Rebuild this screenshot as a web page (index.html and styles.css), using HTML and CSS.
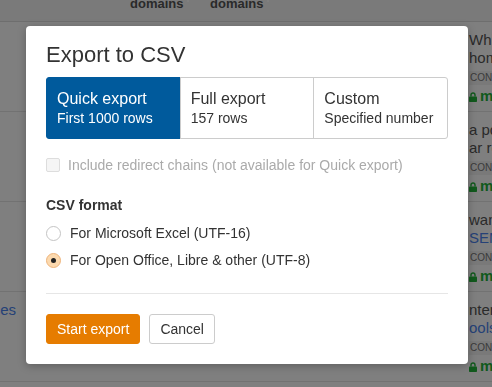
FILE: index.html
```html
<!DOCTYPE html>
<html lang="en">
<head>
    <meta charset="UTF-8">
    <meta name="viewport" content="width=device-width, initial-scale=1.0">
    <title>Export to CSV</title>
    <link rel="stylesheet" href="styles.css">
</head>
<body>
    <div class="page">
        <div class="row head">
            <div class="cell"></div>
            <div class="cell"></div>
            <div class="cell th">Referring<br>domains<span class="tip"></span></div>
            <div class="cell th">Linking<br>domains<span class="tip"></span></div>
            <div class="cell"></div>
            <div class="cell"></div>
        </div>
        <div class="row">
            <div class="cell first"></div>
            <div class="cell"></div><div class="cell"></div><div class="cell"></div><div class="cell"></div>
            <div class="cell desc">
                <div class="line">While</div>
                <div class="line">homepage</div>
                <div class="tag">CONTENT</div>
                <div class="site"><svg class="lock" width="8" height="10" viewBox="0 0 8 10"><path d="M2 4.5V3a2 2 0 0 1 4 0v1.5" fill="none" stroke="currentColor" stroke-width="1.4"/><rect x="0" y="4.5" width="8" height="5.5" rx="0.8" fill="currentColor"/></svg>majestic</div>
            </div>
        </div>
        <div class="row">
            <div class="cell first"></div>
            <div class="cell"></div><div class="cell"></div><div class="cell"></div><div class="cell"></div>
            <div class="cell desc">
                <div class="line">a post</div>
                <div class="line">ar results</div>
                <div class="tag">CONTENT</div>
                <div class="site"><svg class="lock" width="8" height="10" viewBox="0 0 8 10"><path d="M2 4.5V3a2 2 0 0 1 4 0v1.5" fill="none" stroke="currentColor" stroke-width="1.4"/><rect x="0" y="4.5" width="8" height="5.5" rx="0.8" fill="currentColor"/></svg>majestic</div>
            </div>
        </div>
        <div class="row">
            <div class="cell first"></div>
            <div class="cell"></div><div class="cell"></div><div class="cell"></div><div class="cell"></div>
            <div class="cell desc">
                <div class="line">wants</div>
                <div class="line"><a href="#">SEMrush</a></div>
                <div class="tag">CONTENT</div>
                <div class="site"><svg class="lock" width="8" height="10" viewBox="0 0 8 10"><path d="M2 4.5V3a2 2 0 0 1 4 0v1.5" fill="none" stroke="currentColor" stroke-width="1.4"/><rect x="0" y="4.5" width="8" height="5.5" rx="0.8" fill="currentColor"/></svg>majestic</div>
            </div>
        </div>
        <div class="row">
            <div class="cell first"><a href="#">Top resources</a></div>
            <div class="cell"></div><div class="cell"></div><div class="cell"></div><div class="cell"></div>
            <div class="cell desc">
                <div class="line">nternal</div>
                <div class="line"><a href="#">ools</a></div>
                <div class="tag">CONTENT</div>
                <div class="site"><svg class="lock" width="8" height="10" viewBox="0 0 8 10"><path d="M2 4.5V3a2 2 0 0 1 4 0v1.5" fill="none" stroke="currentColor" stroke-width="1.4"/><rect x="0" y="4.5" width="8" height="5.5" rx="0.8" fill="currentColor"/></svg>majestic</div>
            </div>
        </div>
    </div>

    <div class="overlay"></div>

    <div class="modal">
        <h2 class="modal-title">Export to CSV</h2>
        <div class="tabs">
            <div class="tab active">
                <div class="tab-name">Quick export</div>
                <div class="tab-sub">First 1000 rows</div>
            </div>
            <div class="tab">
                <div class="tab-name">Full export</div>
                <div class="tab-sub">157 rows</div>
            </div>
            <div class="tab">
                <div class="tab-name">Custom</div>
                <div class="tab-sub">Specified number</div>
            </div>
        </div>

        <label class="option disabled"><span class="box"></span>Include redirect chains (not available for Quick export)</label>

        <div class="group-title">CSV format</div>
        <label class="option radio"><span class="circle"></span>For Microsoft Excel (UTF-16)</label>
        <label class="option radio checked"><span class="circle"></span>For Open Office, Libre &amp; other (UTF-8)</label>

        <div class="divider"></div>

        <div class="actions">
            <button class="btn btn-primary">Start export</button>
            <button class="btn">Cancel</button>
        </div>
    </div>
</body>
</html>
```

FILE: styles.css
```css
html, body {
    margin: 0;
    height: 100%;
    overflow: hidden;
}
body {
    font-family: "Liberation Sans", Arial, sans-serif;
    background-color: #fff;
    color: #333;
}
a {
    color: #4a83ee;
    text-decoration: none;
}

/* page behind the dialog */
.page {
    margin-top: -28px;
    white-space: nowrap;
}
.row {
    display: grid;
    grid-template-columns: 16px 114px 80px 80px 178px 24px;
    height: 90px;
    box-sizing: border-box;
    border-bottom: 1px solid #e4e4e4;
}
.row.head {
    height: 50px;
    padding: 8px 0 9px;
    background-color: #f4f4f4;
    border-bottom: 1px solid #dcdcdc;
}
.th {
    font-size: 13px;
    line-height: 16px;
    font-weight: bold;
    color: #555;
}
.tip {
    display: inline-block;
    width: 2px;
    height: 6px;
    margin-left: 4px;
    background-color: #fff;
    vertical-align: 6px;
}
.cell {
    min-width: 0;
}
.first {
    display: flex;
    justify-content: flex-end;
    padding-top: 9px;
    font-size: 15px;
    line-height: 18px;
}
.desc {
    padding: 9px 0 0 1px;
    font-size: 15px;
    line-height: 18px;
    color: #555;
}
.tag {
    display: inline-block;
    padding: 0 3px 0 1px;
    font-size: 10px;
    line-height: 14px;
    color: #777;
    background-color: #f2f2f2;
}
.site {
    margin-top: 2px;
    font-weight: bold;
    color: #22b33a;
}
.lock {
    margin-right: 3px;
    vertical-align: -1px;
}

.overlay {
    position: fixed;
    inset: 0;
    background-color: rgba(0, 0, 0, 0.5);
}

/* dialog */
.modal {
    position: absolute;
    top: 26px;
    left: 26px;
    width: 442px;
    box-sizing: border-box;
    padding: 16px 20px 20px;
    background-color: #fff;
    border-radius: 4px;
    box-shadow: 0 2px 8px rgba(0, 0, 0, 0.25);
}
.modal-title {
    margin: 0 0 9px;
    font-size: 22px;
    line-height: 26px;
    font-weight: normal;
    color: #333;
}
.tabs {
    display: flex;
}
.tab {
    flex: 1;
    padding: 11px 10px;
    border: 1px solid #ccc;
    margin-left: -1px;
    color: #333;
}
.tab:first-child {
    margin-left: 0;
    border-radius: 3px 0 0 3px;
}
.tab:last-child {
    border-radius: 0 3px 3px 0;
}
.tab.active {
    background-color: #005a9c;
    border-color: #005a9c;
    color: #fff;
}
.tab-name {
    font-size: 16px;
    line-height: 20px;
}
.tab-sub {
    font-size: 14px;
    line-height: 18px;
}

.option {
    display: flex;
    align-items: center;
    font-size: 14px;
    line-height: 20px;
    color: #333;
}
.option.disabled {
    margin-top: 16px;
    color: #aaa;
}
.box {
    width: 12px;
    height: 12px;
    margin-right: 8px;
    border: 1px solid #ddd;
    border-radius: 2px;
    background-color: #f5f5f5;
}
.group-title {
    margin-top: 20px;
    font-size: 14px;
    line-height: 20px;
    font-weight: bold;
    color: #333;
}
.radio {
    margin-top: 8px;
}
.radio + .radio {
    margin-top: 7px;
}
.circle {
    display: flex;
    align-items: center;
    justify-content: center;
    width: 13px;
    height: 13px;
    margin-right: 9px;
    border: 1px solid #c4c4c4;
    border-radius: 50%;
    background-color: #fff;
}
.checked .circle {
    border-color: #eeb47c;
    background-color: #fcd9ae;
}
.checked .circle::after {
    content: "";
    width: 5px;
    height: 5px;
    border-radius: 50%;
    background-color: #222;
}

.divider {
    margin-top: 23px;
    height: 1px;
    background-color: #e6e6e6;
}
.actions {
    display: flex;
    gap: 9px;
    margin-top: 20px;
}
.btn {
    padding: 4px 10px;
    font-family: inherit;
    font-size: 14px;
    line-height: 20px;
    color: #333;
    background-color: #fff;
    border: 1px solid #ccc;
    border-radius: 3px;
}
.btn-primary {
    color: #fff;
    background-color: #e67c00;
    border-color: #e67c00;
}
```
